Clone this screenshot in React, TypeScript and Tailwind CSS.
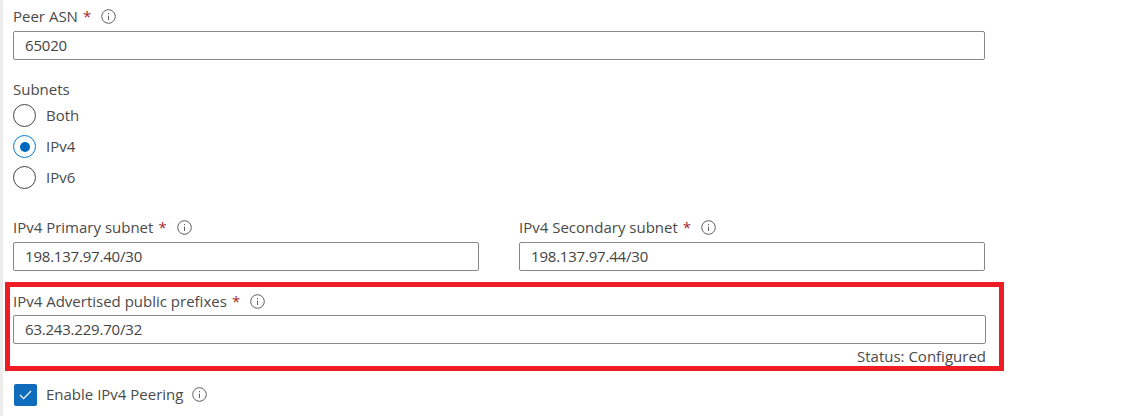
import type { ReactNode } from 'react';

function InfoIcon() {
  return (
    <svg width="15" height="15" viewBox="0 0 15 15" fill="none" className="shrink-0">
      <circle cx="7.5" cy="7.5" r="6.8" stroke="#605e5c" strokeWidth="1" />
      <path d="M7.5 6.6V11" stroke="#605e5c" strokeWidth="1" />
      <rect x="7" y="4" width="1" height="1.2" fill="#605e5c" />
    </svg>
  );
}

function Label({ text }: { text: string }) {
  return (
    <div className="flex h-[20px] items-center text-[15px] leading-[20px] text-[#4a4a4a]">
      <span>{text}</span>
      <span className="ml-[5px] text-[#a4262c]">*</span>
      <span className="ml-[10px]">
        <InfoIcon />
      </span>
    </div>
  );
}

function TextBox({ value }: { value: string }) {
  return (
    <div className="flex h-[29px] items-center rounded-[2px] border border-[#8a8886] bg-white pl-[11px] text-[15px] tracking-[-0.2px] text-[#444]">
      {value}
    </div>
  );
}

function Radio({ label, checked }: { label: string; checked?: boolean }) {
  return (
    <div className="flex h-[23px] items-center gap-[10px] text-[15px] text-[#4a4a4a]">
      <span
        className={`flex h-[23px] w-[23px] items-center justify-center rounded-full border ${
          checked ? 'border-[#0078d4]' : 'border-[#444]'
        }`}
      >
        {checked && <span className="h-[10px] w-[10px] rounded-full bg-[#0067c0]" />}
      </span>
      {label}
    </div>
  );
}

function Field({ gap = 'gap-[5px]', children }: { gap?: string; children: ReactNode }) {
  return <div className={`flex flex-col ${gap}`}>{children}</div>;
}

export default function App() {
  return (
    <div
      className="relative h-[416px] w-[1123px] overflow-hidden border-l-[3px] border-[#ececec] bg-white"
      style={{ fontFamily: '"Open Sans", "Noto Sans", sans-serif' }}
    >
      <div className="w-[982px] pl-[10px] pt-[6px]">
        <Field>
          <Label text="Peer ASN" />
          <TextBox value="65020" />
        </Field>

        <div className="mt-[19px] h-[20px] text-[15px] leading-[20px] text-[#4a4a4a]">Subnets</div>
        <div className="mt-[5px] flex flex-col gap-[8px]">
          <Radio label="Both" />
          <Radio label="IPv4" checked />
          <Radio label="IPv6" />
        </div>

        <div className="mt-[28px] grid grid-cols-2 gap-[40px]">
          <Field>
            <Label text="IPv4 Primary subnet" />
            <TextBox value="198.137.97.40/30" />
          </Field>
          <Field>
            <Label text="IPv4 Secondary subnet" />
            <TextBox value="198.137.97.44/30" />
          </Field>
        </div>
      </div>

      <div className="ml-[2px] mt-[11px] h-[89px] w-[999px] border-[5px] border-[#ee1c25] pl-[3px] pr-[13px] pt-[4px]">
        <Field gap="gap-[4px]">
          <Label text="IPv4 Advertised public prefixes" />
          <TextBox value="63.243.229.70/32" />
        </Field>
        <div className="mt-[2px] text-right text-[15px] leading-[20px] text-[#4a4a4a]">Status: Configured</div>
      </div>

      <div className="ml-[11px] mt-[12px] flex h-[23px] items-center gap-[9px] text-[15px] text-[#4a4a4a]">
        <span className="flex h-[22px] w-[23px] items-center justify-center rounded-[2px] bg-[#0f6cbd]">
          <svg width="15" height="15" viewBox="0 0 15 15" fill="none">
            <path d="M2 8l3.6 3.6L13 4" stroke="white" strokeWidth="1.2" />
          </svg>
        </span>
        <span>Enable IPv4 Peering</span>
        <InfoIcon />
      </div>

      <span className="absolute -left-[3px] top-[347px] h-[5px] w-[3px] border border-[#222]" />
    </div>
  );
}
